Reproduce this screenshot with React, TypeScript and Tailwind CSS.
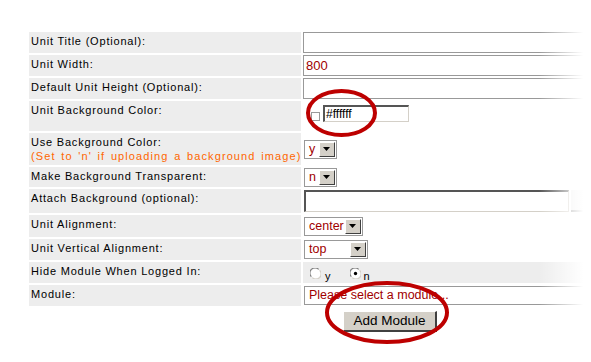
import React from "react";

const labelCls = "text-[11px] leading-[14px] tracking-[0.8px] text-black pt-[2px] pl-[2px] whitespace-nowrap";

function Row({ h, label, right, rightBg = false }: { h: number; label: React.ReactNode; right: React.ReactNode; rightBg?: boolean }) {
  return (
    <div className="flex gap-[2px]" style={{ height: h }}>
      <div className={"w-[272px] shrink-0 bg-[#ededed] " + labelCls}>{label}</div>
      <div className={"flex-1 flex items-center " + (rightBg ? "bg-[#ededed]" : "")}>{right}</div>
    </div>
  );
}

function TextBox({ value }: { value?: string }) {
  return (
    <div className="h-full w-full border border-[#999] bg-white flex items-center pl-[2px] text-[13px] text-[#a00000]">
      {value}
    </div>
  );
}

function DropBtn() {
  return (
    <div className="h-full w-[16px] shrink-0 bg-[#d4d0c8] border-t border-l border-t-white border-l-white border-b border-r border-b-[#404040] border-r-[#404040] flex items-center justify-center">
      <svg width="8" height="5" viewBox="0 0 8 5"><path d="M0 0H7L3.5 4Z" fill="#000" /></svg>
    </div>
  );
}

function Select({ value, w }: { value: string; w: string }) {
  return (
    <div className={"h-[19px] flex border border-[#999] bg-white p-[1px] " + w}>
      <div className="flex-1 text-[12.5px] leading-[15px] text-[#a00000] pl-[3px] overflow-hidden whitespace-nowrap">{value}</div>
      <DropBtn />
    </div>
  );
}

function Radio({ checked }: { checked?: boolean }) {
  return (
    <svg width="11" height="11" viewBox="0 0 12 12">
      <circle cx="6" cy="6" r="5.5" fill="#fff" />
      <path d="M1.5 9.5A5 5 0 0 1 9.5 1.5" stroke="#808080" strokeWidth="1.2" fill="none" />
      <path d="M2.5 10.5A5 5 0 0 0 10.5 2.5" stroke="#d4d0c8" strokeWidth="1.2" fill="none" />
      {checked && <circle cx="6" cy="6" r="1.8" fill="#000" />}
    </svg>
  );
}

export default function App() {
  return (
    <div className="relative w-[591px] h-[362px] bg-white overflow-hidden font-['Liberation_Sans',Arial,sans-serif]">
      <div className="pt-[32px] pl-[29px] w-[625px] flex flex-col gap-[2px]">
        <Row h={21} label="Unit Title (Optional):" right={<TextBox />} />
        <Row h={21} label="Unit Width:" right={<TextBox value="800" />} />
        <Row h={21} label="Default Unit Height (Optional):" right={<TextBox />} />
        <Row
          h={30}
          label="Unit Background Color:"
          right={
            <div className="h-full w-full flex items-start pt-[4px] pl-[8px]">
              <div className="mt-[7px] w-[9px] h-[9px] border border-[#999] bg-white" />
              <div className="ml-[3px] w-[86px] h-[17px] bg-white border-t-2 border-l-2 border-t-[#555] border-l-[#555] border-b border-r border-b-[#d4d0c8] border-r-[#d4d0c8] text-[12px] leading-[14px] pl-[1px] text-black">
                #ffffff
              </div>
            </div>
          }
        />
        <Row
          h={32}
          label={
            <>
              <div>Use Background Color:</div>
              <div className="text-[#ff6600] tracking-[1.1px] [word-spacing:1.5px]">(Set to 'n' if uploading a background image)</div>
            </>
          }
          right={<div className="pl-[1px]"><Select value="y" w="w-[33px]" /></div>}
        />
        <Row h={20} label="Make Background Transparent:" right={<div className="pl-[1px]"><Select value="n" w="w-[33px]" /></div>} />
        <Row
          h={24}
          label="Attach Background (optional):"
          right={
            <div className="pl-[1px] flex items-center w-full">
              <div className="h-[22px] w-[265px] bg-white border-t-2 border-l-2 border-t-[#555] border-l-[#555] border-b border-r border-b-[#d4d0c8] border-r-[#d4d0c8]" />
              <div className="ml-[2px] h-[22px] w-[30px] bg-[#ececec] border-b-2 border-b-[#888]" />
            </div>
          }
        />
        <Row h={22} label="Unit Alignment:" right={<div className="pl-[1px]"><Select value="center" w="w-[59px]" /></div>} />
        <Row h={21} label="Unit Vertical Alignment:" right={<div className="pl-[1px]"><Select value="top" w="w-[64px]" /></div>} />
        <Row
          h={21}
          rightBg
          label="Hide Module When Logged In:"
          right={
            <div className="flex items-center pl-[7px] pt-[1px]">
              <Radio />
              <span className="ml-[4px] mt-[6px] text-[11px] leading-[12px]">y</span>
              <span className="ml-[19px]"><Radio checked /></span>
              <span className="ml-[3px] mt-[6px] text-[11px] leading-[12px]">n</span>
            </div>
          }
        />
        <Row
          h={21}
          label="Module:"
          right={<div className="pl-[1px] w-full"><Select value="Please select a module..." w="w-[320px]" /></div>}
        />
      </div>
      <div className="pl-[343px] pt-[2px]">
        <button className="w-[94px] h-[21px] bg-[#d4d0c8] border-t border-l border-t-white border-l-white border-b-2 border-r-2 border-b-[#404040] border-r-[#404040] text-[13.5px] leading-[16px] text-black">
          Add Module
        </button>
      </div>
      <div className="absolute top-0 right-0 w-[52px] h-full bg-gradient-to-r from-white/0 to-white to-[85%]" />
      <svg className="absolute inset-0 pointer-events-none" width="591" height="362">
        <ellipse cx="341.5" cy="113" rx="33.5" ry="22" fill="none" stroke="#bd0000" strokeWidth="4" />
        <ellipse cx="387" cy="312.5" rx="60" ry="29.5" fill="none" stroke="#bd0000" strokeWidth="4" />
      </svg>
    </div>
  );
}
